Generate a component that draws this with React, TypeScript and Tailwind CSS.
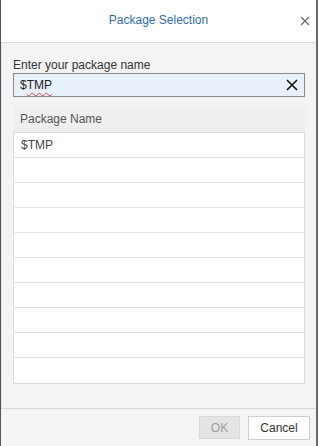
import React from "react";

export default function App() {
  const rows = ["$TMP", "", "", "", "", "", "", "", "", ""];
  return (
    <div
      className="w-[318px] h-[446px] flex flex-col bg-[#f4f4f4] border-l border-l-[#555] border-r-2 border-r-[#6a6a6a] overflow-hidden"
      style={{ fontFamily: '"Liberation Sans", Arial, sans-serif' }}
    >
      <div className="h-[43px] shrink-0 bg-white border-b border-[#d6d6d6] relative flex items-center justify-center">
        <span className="text-[12px] text-[#2f6ea5] pb-[2px]">Package Selection</span>
        <svg className="absolute right-[6px] top-[16px]" width="10" height="10" viewBox="0 0 10 10">
          <path d="M1 1 L9 9 M9 1 L1 9" stroke="#666" strokeWidth="1.2" fill="none" />
        </svg>
      </div>
      <div className="flex-1 flex flex-col pl-[11px] pr-[11px] pt-[14px] border-l border-l-[#e2e2e2]">
        <div className="h-[16px] leading-[16px] text-[12px] text-[#333]">Enter your package name</div>
        <div className="h-[24px] bg-[#e8f1fa] border border-[#8a8a8a] flex items-center pl-[6px] pr-[6px]">
          <span className="text-[12px] text-[#222] flex-1">
            $<span className="underline decoration-wavy decoration-[#e04848] decoration-[1px] underline-offset-[3px]">TMP</span>
          </span>
          <svg width="12" height="12" viewBox="0 0 12 12">
            <path d="M1 1 L11 11 M11 1 L1 11" stroke="#111" strokeWidth="1.6" fill="none" />
          </svg>
        </div>
        <div className="mt-[8px] h-[278px] bg-[#efefef] flex flex-col">
          <div className="h-[27px] shrink-0 flex items-center pl-[7px] text-[12px] text-[#555]">Package Name</div>
          <div className="flex-1 flex flex-col bg-white border border-[#dcdcdc]">
            {rows.map((r, i) => (
              <div
                key={i}
                className="h-[25px] shrink-0 border-b border-[#e2e2e2] flex items-center pl-[7px] text-[12px] text-[#444] last:border-b-0"
              >
                {r}
              </div>
            ))}
          </div>
        </div>
      </div>
      <div className="h-[38px] shrink-0 border-t border-[#d6d6d6] flex items-center justify-end gap-[8px] pr-[6px]">
        <button className="w-[41px] h-[23px] bg-[#e4e4e4] border border-[#d8d8d8] text-[12px] text-[#9a9a9a]">OK</button>
        <button className="w-[62px] h-[24px] bg-white border border-[#cfcfcf] text-[12px] text-[#333]">Cancel</button>
      </div>
    </div>
  );
}
